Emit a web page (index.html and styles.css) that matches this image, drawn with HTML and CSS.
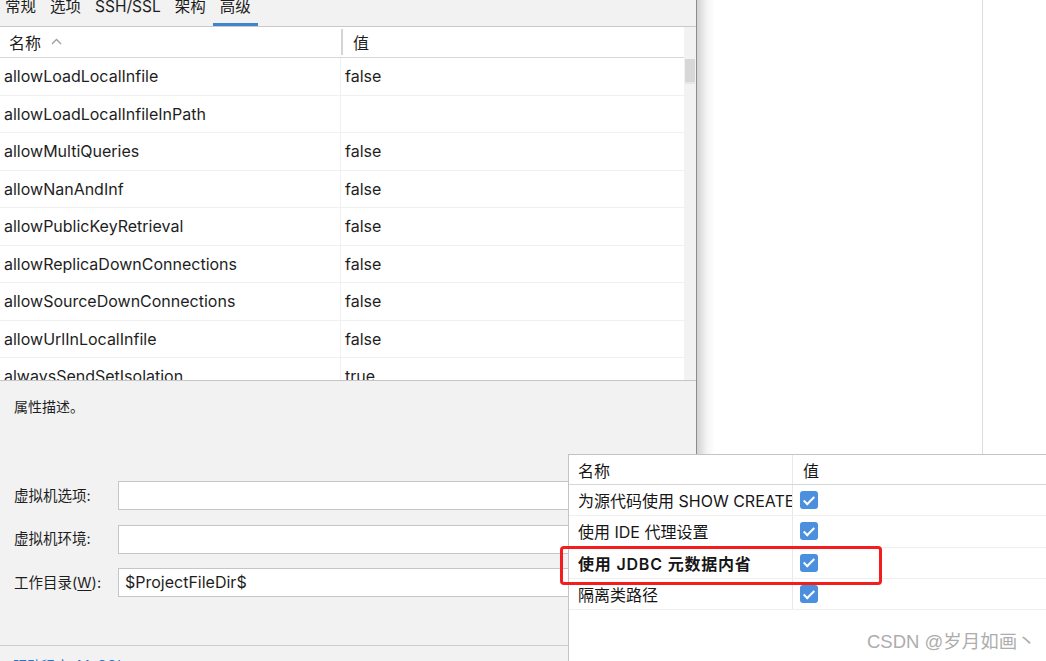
FILE: index.html
```html
<!DOCTYPE html>
<html lang="zh-CN">
<head>
    <meta charset="UTF-8">
    <title>数据源属性 - 高级</title>
    <link rel="stylesheet" href="styles.css">
</head>
<body>
    <div class="screen">
        <div class="dialog">
            <div class="tabs">
                <span class="tab">常规</span>
                <span class="tab">选项</span>
                <span class="tab">SSH/SSL</span>
                <span class="tab">架构</span>
                <span class="tab active">高级</span>
            </div>

            <div class="props">
                <div class="grid">
                    <div class="grid-head">
                        <div class="cell name">名称
                            <svg class="sort" width="11" height="7" viewBox="0 0 11 7"><polyline points="1,6 5.5,1.5 10,6" fill="none" stroke="#9c9c9c" stroke-width="1.3"/></svg>
                        </div>
                        <div class="cell value">值</div>
                    </div>
                    <div class="grid-row"><div class="cell name">allowLoadLocalInfile</div><div class="cell value">false</div></div>
                    <div class="grid-row"><div class="cell name">allowLoadLocalInfileInPath</div><div class="cell value"></div></div>
                    <div class="grid-row"><div class="cell name">allowMultiQueries</div><div class="cell value">false</div></div>
                    <div class="grid-row"><div class="cell name">allowNanAndInf</div><div class="cell value">false</div></div>
                    <div class="grid-row"><div class="cell name">allowPublicKeyRetrieval</div><div class="cell value">false</div></div>
                    <div class="grid-row"><div class="cell name">allowReplicaDownConnections</div><div class="cell value">false</div></div>
                    <div class="grid-row"><div class="cell name">allowSourceDownConnections</div><div class="cell value">false</div></div>
                    <div class="grid-row"><div class="cell name">allowUrlInLocalInfile</div><div class="cell value">false</div></div>
                    <div class="grid-row"><div class="cell name">alwaysSendSetIsolation</div><div class="cell value">true</div></div>
                </div>
                <div class="vscroll"><div class="thumb"></div></div>
            </div>

            <div class="desc">属性描述。</div>

            <div class="form">
                <div class="field">
                    <label>虚拟机选项:</label>
                    <div class="input"></div>
                </div>
                <div class="field">
                    <label>虚拟机环境:</label>
                    <div class="input"></div>
                </div>
                <div class="field">
                    <label>工作目录(<u>W</u>):</label>
                    <div class="input">$ProjectFileDir$</div>
                </div>
            </div>

            <div class="footer">
                <a class="link">驱动程序: MySQL</a>
            </div>
        </div>

        <div class="side">
            <div class="side-main"></div>
        </div>
    </div>

    <div class="popup">
        <div class="popup-head">
            <div class="pcell pname">名称</div>
            <div class="pcell pvalue">值</div>
        </div>
        <div class="popup-row">
            <div class="pcell pname">为源代码使用 SHOW CREATE TABLE</div>
            <div class="pcell pvalue"><span class="check"></span></div>
        </div>
        <div class="popup-row">
            <div class="pcell pname">使用 IDE 代理设置</div>
            <div class="pcell pvalue"><span class="check"></span></div>
        </div>
        <div class="popup-row strong">
            <div class="pcell pname">使用 JDBC 元数据内省</div>
            <div class="pcell pvalue"><span class="check"></span></div>
        </div>
        <div class="popup-row">
            <div class="pcell pname">隔离类路径</div>
            <div class="pcell pvalue"><span class="check"></span></div>
        </div>
    </div>

    <div class="highlight"></div>
    <div class="watermark">CSDN @岁月如画丶</div>
</body>
</html>
```

FILE: styles.css
```css
html, body {
    margin: 0;
    height: 100%;
    overflow: hidden;
}
body {
    font-family: Inter, "Noto Sans CJK SC", sans-serif;
    font-size: 16px;
    color: #1e1e1e;
    background-color: #fff;
}
.screen {
    display: flex;
    height: 661px;
    overflow: hidden;
}

/* left dialog */
.dialog {
    width: 696px;
    flex-shrink: 0;
    display: flex;
    flex-direction: column;
    background-color: #f2f2f2;
    border-right: 1px solid #8c8c8c;
}
.dialog > div {
    flex-shrink: 0;
}
.tabs {
    display: flex;
    height: 26px;
    border-bottom: 1px solid #c9c9c9;
    font-size: 15.5px;
}
.tab {
    height: 26px;
    box-sizing: border-box;
    padding: 0 7px;
    line-height: 14px;
}
.tab:first-child {
    padding-left: 5px;
}
.tab.active {
    border-bottom: 3px solid #3f84cc;
}

.props {
    display: flex;
    height: 353px;
    border-bottom: 1px solid #c6c6c6;
    overflow: hidden;
}
.grid {
    flex: 1;
    background-color: #fff;
}
.grid-head {
    display: flex;
    height: 30px;
    border-bottom: 1px solid #d8d8d8;
    align-items: center;
}
.grid-head .cell.name {
    width: 332px;
    padding-left: 9px;
    border-right: 2px solid #d4d4d4;
    height: 26px;
    display: flex;
    align-items: center;
}
.grid-head .cell.value {
    padding-left: 10px;
}
.sort {
    margin-left: 10px;
    margin-top: -2px;
}
.grid-row {
    display: flex;
    height: 37.5px;
    flex-shrink: 0;
    box-sizing: border-box;
    border-bottom: 1px solid #f0f0f0;
}
.grid-row .cell {
    display: flex;
    align-items: center;
}
.grid-row .cell.name {
    width: 336px;
    padding-left: 4px;
    border-right: 1px solid #f0f0f0;
}
.grid-row .cell.value {
    padding-left: 4px;
}
.vscroll {
    width: 12px;
    background-color: #f2f2f2;
    padding-top: 32px;
}
.thumb {
    width: 10px;
    height: 23px;
    margin-left: 1px;
    background-color: #d7d7d7;
    border-bottom: 2px solid #e6e6e6;
}

.desc {
    font-size: 14px;
    padding: 16px 0 0 14px;
    line-height: 20px;
    height: 84px;
}

.form {
    display: flex;
    flex-direction: column;
    gap: 14.5px;
    padding-right: 12px;
}
.field {
    display: flex;
    align-items: center;
    height: 29px;
}
.field label {
    width: 104px;
    padding-left: 14px;
    font-size: 14.5px;
    margin-top: -3px;
}
.field u {
    text-underline-offset: 2px;
}
.input {
    flex: 1;
    height: 29px;
    box-sizing: border-box;
    background-color: #fff;
    border: 1px solid #c6c6c6;
    padding-left: 6px;
    line-height: 27px;
}

.footer {
    margin-top: 48px;
    border-top: 1px solid #cdcdcd;
    padding: 10px 0 0 13px;
    line-height: 18px;
}
.link {
    color: #2f73c6;
    font-size: 14px;
}

/* right side behind the dialog */
.side {
    flex: 1;
    display: flex;
    background: linear-gradient(to right, #d2d2d2, #f4f4f4 10px, #fff 18px);
}
.side-main {
    width: 285px;
    border-right: 1px solid #dcdcdc;
}

/* popup over everything */
.popup {
    position: absolute;
    left: 568px;
    top: 454px;
    right: 0;
    bottom: 0;
    background-color: #fff;
    border-top: 1px solid #c4c4c4;
    border-left: 1px solid #c4c4c4;
    font-family: Inter, "Noto Sans CJK SC", sans-serif;
    font-size: 16px;
    color: #161616;
}
.popup-head,
.popup-row {
    display: flex;
    box-sizing: border-box;
}
.popup-head {
    height: 30px;
    border-bottom: 1px solid #d6d6d6;
}
.popup-row {
    height: 31.3px;
    border-bottom: 1px solid #efefef;
}
.pcell {
    display: flex;
    align-items: center;
    white-space: nowrap;
    overflow: hidden;
}
.pname {
    width: 214px;
    padding-left: 9px;
    border-right: 1px solid #e8e8e8;
}
.pvalue {
    padding-left: 7px;
}
.popup-head .pvalue {
    padding-left: 10px;
}
.popup-row.strong .pname {
    font-weight: 600;
    letter-spacing: 0.8px;
}
.check {
    width: 18px;
    height: 18px;
    border-radius: 3px;
    background-color: #4a90de;
    position: relative;
}
.check::after {
    content: "";
    position: absolute;
    left: 6px;
    top: 2.5px;
    width: 4px;
    height: 9px;
    border: solid #fff;
    border-width: 0 2px 2px 0;
    transform: rotate(45deg);
}

.highlight {
    position: absolute;
    left: 560px;
    top: 546px;
    width: 316px;
    height: 33px;
    border: 3px solid #f41d1d;
    border-radius: 4px;
}
.watermark {
    position: absolute;
    left: 867px;
    top: 627px;
    font-family: "Liberation Sans", "Noto Sans CJK SC", sans-serif;
    font-size: 18.5px;
    color: #adadad;
}
```
